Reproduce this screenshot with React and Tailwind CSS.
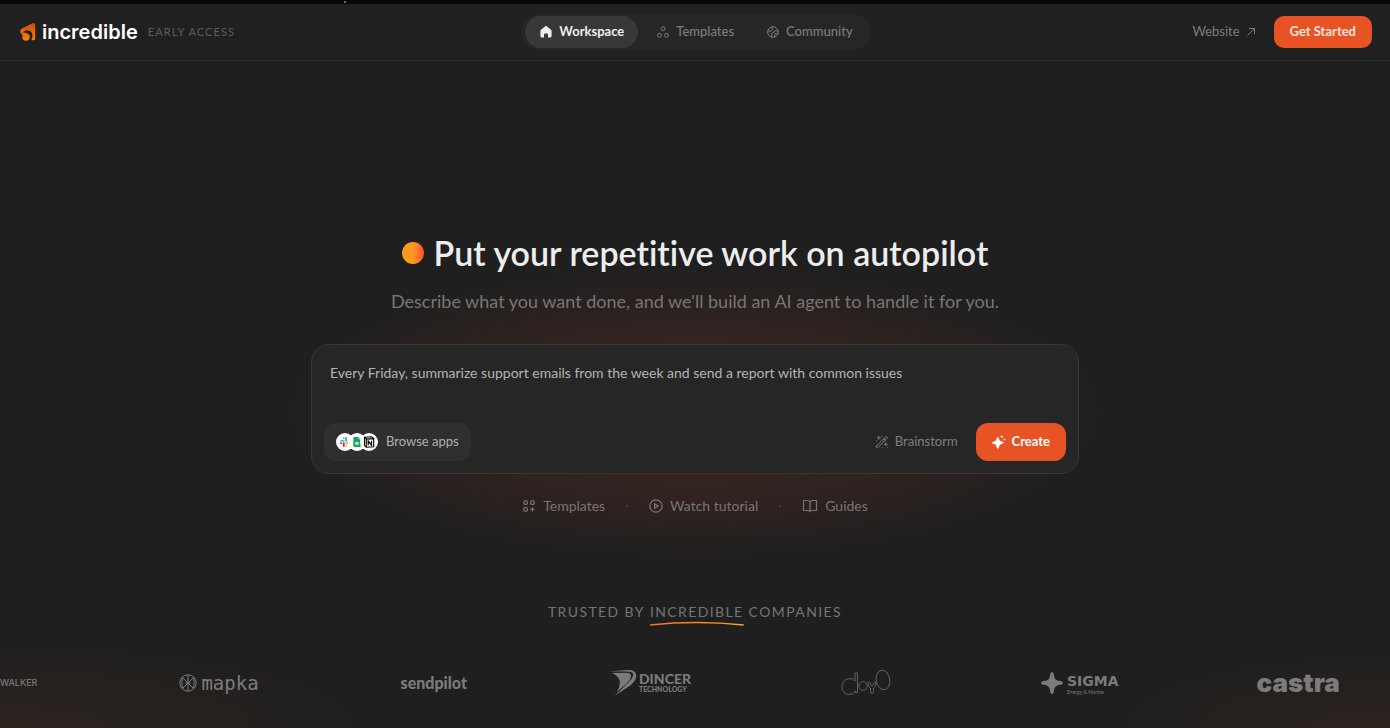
import React, { useState } from "react";

const PROMPT = "Every Friday, summarize support emails from the week and send a report with common issues";

function LogoMark() {
  return (
    <svg viewBox="0 0 16 18" className="h-[18px] w-4" aria-hidden="true">
      <defs>
        <linearGradient id="mark" x1="0" y1="0" x2="0" y2="18" gradientUnits="userSpaceOnUse">
          <stop offset="0" stopColor="#cf4a10" />
          <stop offset="1" stopColor="#ff8200" />
        </linearGradient>
      </defs>
      <g fill="url(#mark)">
        <path d="M12.500.3Q15.2-.5 15.2 2.200V15.500Q15.200 17.200 13.500 17.200H11.300Q12.500 15.500 12.500 13 12.400 7.300 7 7.200 4.300 7.300 2.600 9.600L1.200 11.200Q-.3 8.500.3 7.200.5 6.300 2 5.400Z" />
        <circle cx="6" cy="14" r="3.700" />
        <path d="M1.200 11.200 4.200 8.500Q3.700 10.500 6.500 10.300 9 11 9.600 13.200L6 15 2.800 12Z" />
      </g>
    </svg>
  );
}

function HomeIcon() {
  return (
    <svg viewBox="0 0 14 14" className="size-3.5" fill="currentColor" aria-hidden="true">
      <path d="M6.2 1.300a1.300 1.300 0 0 1 1.600 0l4.200 3.500q.6.500.6 1.300v5q0 1.400-1.400 1.400H9V9.500q0-1-1-1H6q-1 0-1 1v3H2.800q-1.400 0-1.400-1.400v-5q0-.8.6-1.300Z" />
    </svg>
  );
}

function CirclesIcon() {
  return (
    <svg viewBox="0 0 14 14" className="size-3.5" fill="none" stroke="currentColor" aria-hidden="true">
      <circle cx="7" cy="3.700" r="1.900" />
      <circle cx="3.500" cy="10.300" r="1.900" />
      <circle cx="10.500" cy="10.300" r="1.900" />
    </svg>
  );
}

function GlobeIcon() {
  return (
    <svg viewBox="0 0 14 14" className="size-3.5" fill="none" stroke="currentColor" strokeLinejoin="round" aria-hidden="true">
      <circle cx="7" cy="7" r="5.300" />
      <path d="M2 5.300q2 1.800 3.500.5t.5-4M12.200 6.300l-2.500-.8-1.700.8-.2 1.300-2 .7-.3 4M12 8.900l-1.900-.6-1.500 1.400.2 2.200" />
    </svg>
  );
}

function ArrowIcon() {
  return (
    <svg viewBox="0 0 10 10" className="size-2.5" fill="none" stroke="currentColor" aria-hidden="true">
      <path d="M1.500 8.500l7-7M3 1.500h5.500V7" />
    </svg>
  );
}

function SlackIcon() {
  return (
    <svg viewBox="0 0 10 10" className="size-2.5" strokeWidth="1.800" strokeLinecap="round" aria-hidden="true">
      <path d="M3.800 1v.2M1 3.800h2.800" stroke="#36c5f0" />
      <path d="M6.200 1v2.800M9 3.800h-.2" stroke="#2eb67d" />
      <path d="M6.200 6.200H9M6.200 9v-.2" stroke="#ecb22e" />
      <path d="M3.800 6.200V9M1 6.200h.2" stroke="#e01e5a" />
    </svg>
  );
}

function SheetsIcon() {
  return (
    <svg viewBox="0 0 10 10" className="size-2.5" aria-hidden="true">
      <path d="M1.300 1q0-1 1-1h4l2.500 2.500V9q0 1-1 1H2.300q-1 0-1-1Z" fill="#1ea362" />
      <path d="M6.300 0v2.500h2.500Z" fill="#87ceac" />
      <path d="M3.200 5h3.600v2.800H3.200Z" fill="#b9e3cd" />
    </svg>
  );
}

function NotionIcon() {
  return (
    <svg viewBox="0 0 12 12" className="size-3" fill="none" stroke="#000" aria-hidden="true">
      <path d="M1.500 1.200l7-.4 2.200 1.700v8.200l-7.400.6-1.800-2ZM1.500 1.200l1.900 1.900 7.300-.5M3.300 3.100v8.200" strokeWidth="1.100" />
      <path d="M5.200 9.300V5l3.300 4.200V4.700" strokeWidth="1.200" />
    </svg>
  );
}

function WandIcon() {
  return (
    <svg viewBox="0 0 14 14" className="size-3.5" fill="none" stroke="currentColor" strokeLinecap="round" strokeLinejoin="round" aria-hidden="true">
      <path d="M1.500 11L10.500 2q.7-.7 1.400 0t0 1.400L3 12.400q-.7.7-1.400 0t-.1-1.400ZM8.700 3.800l1.400 1.400" />
      <path d="M3.800 1.300v3M2.300 2.800h3M10.800 7.800v3M9.300 9.300h3M1.500 5.800h.1M7 1.300h.1M7.500 12.600h.1M12.600 12.400h.1" />
    </svg>
  );
}

function SparkleIcon() {
  return (
    <svg viewBox="0 0 14 14" className="size-3.5" fill="currentColor" aria-hidden="true">
      <path d="M5.800 2q.6 0 .8.700l1 2.500q.2.600.8.800l2.500 1q.7.300.7.800t-.7.800l-2.500 1q-.6.200-.8.800l-1 2.500q-.2.700-.8.700t-.8-.7l-1-2.500q-.2-.6-.8-.8l-2.500-1Q0 8.300 0 7.800T.7 7l2.500-1q.6-.2.8-.8l1-2.500q.2-.7.800-.7Z" />
      <path d="M9.800 0l.5 1.300 1.300.5-1.300.5-.5 1.300-.5-1.300L8 1.800l1.300-.5ZM12.400 3.200l.4 1.100 1.100.4-1.100.4-.4 1.100-.4-1.100-1.100-.4 1.100-.4Z" />
    </svg>
  );
}

function GridIcon() {
  return (
    <svg viewBox="0 0 14 14" className="size-3.5" fill="none" stroke="currentColor" strokeWidth="1.200" aria-hidden="true">
      <rect x="1.800" y="1.800" width="3.600" height="3.600" rx="1.300" />
      <rect x="8.600" y="1.800" width="3.600" height="3.600" rx="1.300" />
      <rect x="1.800" y="8.600" width="3.600" height="3.600" rx="1.300" />
      <path d="M10.400 8.200v4.400M8.200 10.400h4.400" />
    </svg>
  );
}

function PlayIcon() {
  return (
    <svg viewBox="0 0 14 14" className="size-3.5" fill="none" stroke="currentColor" strokeWidth="1.200" strokeLinejoin="round" aria-hidden="true">
      <circle cx="7" cy="7" r="6.200" />
      <path d="M5.600 4.700L9.300 7 5.600 9.300Z" />
    </svg>
  );
}

function BookIcon() {
  return (
    <svg viewBox="0 0 16 14" className="h-3.5 w-4" fill="none" stroke="currentColor" strokeWidth="1.200" strokeLinejoin="round" aria-hidden="true">
      <path d="M8 3.300Q7.300 1.500 5.500 1.500H1.500v10H6q1.500 0 2 1.300.5-1.300 2-1.300h4.500v-10h-4Q8.700 1.500 8 3.300v9.500" />
    </svg>
  );
}

const tabs = [
  { id: "workspace", label: "Workspace", Icon: HomeIcon },
  { id: "templates", label: "Templates", Icon: CirclesIcon },
  { id: "community", label: "Community", Icon: GlobeIcon },
];

const quickLinks = [
  { label: "Templates", Icon: GridIcon },
  { label: "Watch tutorial", Icon: PlayIcon },
  { label: "Guides", Icon: BookIcon },
];

function Header() {
  const [active, setActive] = useState("workspace");

  return (
    <header className="grid h-[57px] grid-cols-[1fr_auto_1fr] items-center border-b border-[#2a2a2a] bg-[#202020] pr-[18px] pl-5">
      <a href="#home" className="flex items-center">
        <LogoMark />
        <span className="ml-1.5 font-['Inter'] text-[20px] leading-6 font-semibold text-white">incredible</span>
        <span className="ml-2.5 text-[11px] tracking-widest text-[#5c5c5c]">EARLY ACCESS</span>
      </a>

      <nav className="flex items-center gap-1 rounded-full bg-[#262626] px-1 py-0.5">
        {tabs.map(({ id, label, Icon }) => (
          <button
            key={id}
            type="button"
            onClick={() => setActive(id)}
            className={`flex h-8 items-center gap-1.5 rounded-full px-3.5 text-[13px] ${
              active === id ? "bg-[#383838] font-bold text-[#eeeeee]" : "font-medium text-[#7c7c7c]"
            }`}
          >
            <Icon />
            {label}
          </button>
        ))}
      </nav>

      <div className="flex items-center justify-end gap-[18px]">
        <a href="#website" className="flex items-center gap-1.5 text-[13px] text-[#7c7c7c]">
          Website
          <ArrowIcon />
        </a>
        <button type="button" className="h-8 rounded-[10px] bg-[#e85325] px-4 text-[13px] font-bold text-[#f8e3dc]">
          Get Started
        </button>
      </div>
    </header>
  );
}

function PromptCard() {
  const [prompt, setPrompt] = useState(PROMPT);

  return (
    <form
      onSubmit={(e) => e.preventDefault()}
      className="mx-auto w-full max-w-3xl rounded-[18px] border border-[#3b3534] bg-[#262626] p-3"
    >
      <textarea
        aria-label="Describe your agent"
        value={prompt}
        onChange={(e) => setPrompt(e.target.value)}
        className="block h-[66px] w-full resize-none bg-transparent px-1.5 pt-1.5 text-[14px] leading-5 text-[#b4b4b4] outline-none"
      />
      <div className="flex items-center justify-between">
        <button type="button" className="flex h-[38px] items-center gap-2 rounded-xl bg-[#2f2f2f] px-3 text-[13px] text-[#b0b0b0]">
          <span className="flex -space-x-1.5">
            <span className="grid size-[18px] place-items-center rounded-full bg-white"><SlackIcon /></span>
            <span className="grid size-[18px] place-items-center rounded-full bg-white"><SheetsIcon /></span>
            <span className="grid size-[18px] place-items-center rounded-full bg-white"><NotionIcon /></span>
          </span>
          Browse apps
        </button>
        <div className="flex items-center gap-[18px]">
          <button type="button" className="flex items-center gap-1.5 text-[13px] text-[#7e7e7e]">
            <WandIcon />
            Brainstorm
          </button>
          <button type="submit" className="flex h-[38px] items-center gap-1.5 rounded-xl bg-[#e85325] px-4 text-[13px] font-bold text-white">
            <SparkleIcon />
            Create
          </button>
        </div>
      </div>
    </form>
  );
}

function CompanyLogos() {
  return (
    <div className="flex h-10 items-center gap-[142px] overflow-hidden text-[#7b7b7b] *:shrink-0">
      <span className="font-['Inter'] text-[9px] font-medium">WALKER</span>

      <span className="flex items-center gap-1 font-['DejaVu_Sans_Mono'] text-[19px] leading-6">
        <svg viewBox="0 0 18 18" className="size-[18px]" fill="none" stroke="currentColor" aria-hidden="true">
          <circle cx="9" cy="9" r="8.200" />
          <path d="M9 1v16M3.500 3.500l11 11M14.500 3.500l-11 11M6.500 9h5M3.300 4q-1 5 0 10M14.700 4q1 5 0 10" />
        </svg>
        mapka
      </span>

      <span className="text-[16px] font-black">sendpilot</span>

      <span className="flex items-center gap-0.5">
        <svg viewBox="0 0 28 28" className="size-7" fill="currentColor" aria-hidden="true">
          <path d="M0 2.500L18 1q9-.5 9.300 5.500.2 4-5.300 9.500L5.500 27Q17 16 21 11.500q4-4.500 3-7Q23 2.300 17 2.400Z" />
          <path d="M3 4l15-.2q4.500.2 4 3.700-.5 3-5 7.500L8 23q4-8 2.500-12Q9 7 3 4Z" />
        </svg>
        <span className="flex flex-col">
          <span className="text-[14px] leading-[13px] font-black">DINCER</span>
          <span className="text-[7px] leading-[9px] font-black">TECHNOLOGY</span>
        </span>
      </span>

      <svg viewBox="0 0 50 28" className="ml-2 h-7 w-[50px]" fill="none" stroke="currentColor" strokeWidth=".7" role="img" aria-label="doyo">
        <path d="M14 10V5q0-1.500 1.300-1.500T16.500 5v18.500h-2V22Q12 26 7.500 25.500 1 24.500 1 17.500 1.500 11 7.500 9.800 12 9 14 12Z" />
        <circle cx="22" cy="17" r="4.300" />
        <path d="M27 13.500q1.300-1.200 2.200.3.300 3 1.800 3t1.800-3q.9-1.500 2.200-.3.700 4-2.500 5.500v3.500q-.3 2-1.500 2t-1.500-2V19Q26.300 17.500 27 13.500Z" />
        <ellipse cx="42" cy="11" rx="6.800" ry="9.800" transform="rotate(-10 42 11)" />
      </svg>

      <span className="ml-2 flex items-center gap-1">
        <svg viewBox="0 0 22 22" className="size-[22px]" fill="currentColor" aria-hidden="true">
          <path d="M11 0q1.800 0 2.200 4.500.5 3.500 4 4.300Q22 9.300 22 11t-4.800 2.200q-3.500.8-4 4.300Q12.800 22 11 22t-2.200-4.500q-.5-3.500-4-4.300Q0 12.700 0 11t4.800-2.200q3.500-.8 4-4.300Q9.200 0 11 0Z" />
        </svg>
        <span className="flex flex-col pt-1">
          <span className="font-['DejaVu_Sans'] text-[14px] leading-[15px] font-bold">SIGMA</span>
          <span className="text-[5px] leading-[7px]">Energy &amp; Marine</span>
        </span>
      </span>

      <span className="-ml-1 font-['Inter'] text-[26px] leading-8 font-black">castra</span>
    </div>
  );
}

export default function App() {
  return (
    <div className="flex min-h-screen flex-col overflow-hidden bg-[#1f1f1f] bg-[radial-gradient(ellipse_420px_150px_at_50%_412px,#4a2822e0,#3b252290_60%,transparent),radial-gradient(ellipse_400px_90px_at_0%_100%,#38261d80,transparent),radial-gradient(ellipse_300px_80px_at_100%_100%,#38261d80,transparent)] font-['Lato',sans-serif] [font-variant-ligatures:none]">
      <div className="flex h-1 items-center bg-[#080809] pl-[344px]">
        <div className="size-0.5 bg-[#6a6a6a]" />
      </div>
      <Header />

      <main className="flex flex-col">
        <section className="px-6 pt-[168px]">
          <h1 className="flex items-center justify-center gap-2.5 text-[34px] leading-[48px] font-semibold text-[#ededed]">
            <span className="size-[22px] rounded-full bg-linear-to-r from-[#ff981f] from-50% to-[#ff4b35]" />
            Put your repetitive work on autopilot
          </h1>
          <p className="mt-3 mb-[31px] text-center text-[18px] leading-6 text-[#787675]">
            Describe what you want done, and we'll build an AI agent to handle it for you.
          </p>
          <PromptCard />
          <div className="mt-[22px] flex items-center justify-center gap-[21px] text-[14px] leading-5 text-[#7b7472]">
            {quickLinks.map(({ label, Icon }, i) => (
              <React.Fragment key={label}>
                {i > 0 && <span className="size-0.5 rounded-full bg-[#4b403e]" />}
                <a href={`#${label}`} className="flex items-center gap-[7px]">
                  <Icon />
                  {label}
                </a>
              </React.Fragment>
            ))}
          </div>
        </section>

        <section className="mt-[86px]">
          <h2 className="flex justify-center gap-[5px] text-[14px] leading-5 tracking-widest text-[#757575]">
            <span>TRUSTED BY</span>
            <span className="relative">
              INCREDIBLE
              <svg viewBox="0 0 94 5" preserveAspectRatio="none" className="absolute top-[19px] left-0 h-[5px] w-full" fill="none" aria-hidden="true">
                <defs>
                  <linearGradient id="underline">
                    <stop offset="0" stopColor="#ff6a2b" />
                    <stop offset="1" stopColor="#ff9f2a" />
                  </linearGradient>
                </defs>
                <path d="M0 4Q47-1 94 4" stroke="url(#underline)" strokeWidth="1.500" />
              </svg>
            </span>
            <span>COMPANIES</span>
          </h2>
          <div className="mt-[41px]">
            <CompanyLogos />
          </div>
        </section>
      </main>
    </div>
  );
}
